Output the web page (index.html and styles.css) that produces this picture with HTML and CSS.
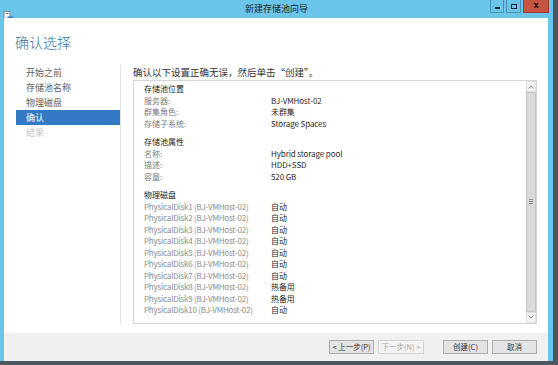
FILE: index.html
```html
<!DOCTYPE html>
<html lang="zh-CN">
<head>
  <meta charset="UTF-8">
  <title>新建存储池向导</title>
  <link rel="stylesheet" href="styles.css">
</head>
<body>
  <div class="window">
    <div class="titlebar">
      <div class="app-icon">
        <svg width="11" height="11" viewBox="0 0 11 11">
          <rect x="1" y="0.5" width="6" height="9" fill="#f4f4f4" stroke="#7d8a92" stroke-width="1"/>
          <rect x="2.5" y="2" width="3" height="1" fill="#7d8a92"/>
          <rect x="4.5" y="5.5" width="6" height="5" fill="#3a7bbf"/>
          <rect x="5.5" y="7" width="4" height="1" fill="#fff"/>
        </svg>
      </div>
      <div class="title">新建存储池向导</div>
      <div class="controls">
        <div class="ctl ctl-min"><span></span></div>
        <div class="ctl ctl-max"><span></span></div>
        <div class="ctl ctl-close">x</div>
      </div>
    </div>

    <div class="client">
      <div class="header">确认选择</div>

      <div class="main">
        <ul class="nav">
          <li>开始之前</li>
          <li>存储池名称</li>
          <li>物理磁盘</li>
          <li class="active">确认</li>
          <li class="disabled">结果</li>
        </ul>

        <div class="content">
          <div class="intro">确认以下设置正确无误，然后单击“创建”。</div>
          <div class="summary">
            <div class="list">
              <div class="section">
                <div class="sec-title">存储池位置</div>
                <div class="row"><span class="label">服务器:</span><span class="value">BJ-VMHost-02</span></div>
                <div class="row"><span class="label">群集角色:</span><span class="value">未群集</span></div>
                <div class="row"><span class="label">存储子系统:</span><span class="value">Storage Spaces</span></div>
              </div>
              <div class="section">
                <div class="sec-title">存储池属性</div>
                <div class="row"><span class="label">名称:</span><span class="value">Hybrid storage pool</span></div>
                <div class="row"><span class="label">描述:</span><span class="value">HDD+SSD</span></div>
                <div class="row"><span class="label">容量:</span><span class="value">520 GB</span></div>
              </div>
              <div class="section">
                <div class="sec-title">物理磁盘</div>
                <div class="row disk"><span class="label">PhysicalDisk1 (BJ-VMHost-02)</span><span class="value">自动</span></div>
                <div class="row disk"><span class="label">PhysicalDisk2 (BJ-VMHost-02)</span><span class="value">自动</span></div>
                <div class="row disk"><span class="label">PhysicalDisk3 (BJ-VMHost-02)</span><span class="value">自动</span></div>
                <div class="row disk"><span class="label">PhysicalDisk4 (BJ-VMHost-02)</span><span class="value">自动</span></div>
                <div class="row disk"><span class="label">PhysicalDisk5 (BJ-VMHost-02)</span><span class="value">自动</span></div>
                <div class="row disk"><span class="label">PhysicalDisk6 (BJ-VMHost-02)</span><span class="value">自动</span></div>
                <div class="row disk"><span class="label">PhysicalDisk7 (BJ-VMHost-02)</span><span class="value">自动</span></div>
                <div class="row disk"><span class="label">PhysicalDisk8 (BJ-VMHost-02)</span><span class="value">热备用</span></div>
                <div class="row disk"><span class="label">PhysicalDisk9 (BJ-VMHost-02)</span><span class="value">热备用</span></div>
                <div class="row disk"><span class="label">PhysicalDisk10 (BJ-VMHost-02)</span><span class="value">自动</span></div>
              </div>
            </div>
            <div class="scrollbar">
              <div class="sb-btn">
                <svg width="6" height="4" viewBox="0 0 6 4"><path d="M0.5 3.5 L3 1 L5.5 3.5" fill="none" stroke="#8a8a8a" stroke-width="1"/></svg>
              </div>
              <div class="sb-thumb"><span class="grip"></span></div>
              <div class="sb-btn">
                <svg width="6" height="4" viewBox="0 0 6 4"><path d="M0.5 0.5 L3 3 L5.5 0.5" fill="none" stroke="#8a8a8a" stroke-width="1"/></svg>
              </div>
            </div>
          </div>
        </div>
      </div>

      <div class="footer">
        <button class="btn">&lt; 上一步(P)</button>
        <button class="btn" disabled>下一步(N) &gt;</button>
        <button class="btn btn-create">创建(C)</button>
        <button class="btn">取消</button>
      </div>
    </div>
  </div>
</body>
</html>
```

FILE: styles.css
```css
* {
  box-sizing: border-box;
}
body {
  margin: 0;
  width: 558px;
  height: 365px;
  background: #4b565e;
  font-family: "Noto Sans CJK SC", "Noto Sans", sans-serif;
  overflow: hidden;
}
.window {
  width: 553px;
  height: 361px;
  background: #6bc5ea;
  display: flex;
  flex-direction: column;
}
.titlebar {
  height: 18px;
  display: grid;
  grid-template-columns: 1fr auto 1fr;
  align-items: start;
}
.app-icon {
  padding: 3px 0 0 3px;
  height: 18px;
}
.title {
  font-size: 9px;
  line-height: 18px;
  color: #1e1e1e;
}
.controls {
  display: flex;
  justify-content: flex-end;
  padding-right: 4px;
}
.ctl {
  height: 13px;
  border: 1px solid #4a8fb0;
  border-top: none;
  display: flex;
  align-items: center;
  justify-content: center;
}
.ctl-min {
  width: 14px;
  margin-right: 2px;
}
.ctl-min span {
  width: 5px;
  height: 2px;
  margin-top: 4px;
  background: #1d2a33;
}
.ctl-max {
  width: 15px;
  margin-right: 2px;
}
.ctl-max span {
  width: 6px;
  height: 5px;
  border: 1.5px solid #1d2a33;
}
.ctl-close {
  width: 26px;
  background: #c75442;
  border-color: #9c3b2e;
  color: #2a1010;
  font-size: 8px;
  font-weight: bold;
  line-height: 1;
  font-family: "DejaVu Sans", sans-serif;
}
.client {
  flex: 1;
  margin: 0 5px 5px 4px;
  background: #fff;
  display: flex;
  flex-direction: column;
}
.header {
  height: 47px;
  padding-left: 11px;
  display: flex;
  align-items: center;
  font-size: 14px;
  font-weight: 300;
  color: #3470a0;
}
.main {
  flex: 1;
  display: flex;
  padding-bottom: 9px;
}
.nav {
  list-style: none;
  margin: 0;
  padding: 0 0 0 12px;
  width: 117px;
  border-right: 1px solid #e2e2e2;
}
.nav li {
  height: 15px;
  line-height: 15px;
  padding-left: 10px;
  font-size: 9px;
  color: #606060;
}
.nav li.active {
  background: #3479c3;
  color: #fff;
}
.nav li.disabled {
  color: #c4c4c4;
}
.content {
  flex: 1;
  display: flex;
  flex-direction: column;
  padding: 0 11px 0 12px;
}
.intro {
  height: 15px;
  line-height: 15px;
  font-size: 9.5px;
  color: #333;
}
.summary {
  flex: 1;
  border: 1px solid #d6d6d6;
  display: flex;
}
.list {
  flex: 1;
  padding: 2px 0 0 10px;
}
.section {
  margin-bottom: 7px;
}
.sec-title,
.row {
  height: 11.5px;
  line-height: 11.5px;
  font-size: 8px;
}
.sec-title {
  color: #222;
}
.row {
  display: flex;
}
.label {
  width: 127px;
  color: #7a7a7a;
}
.value {
  color: #2a2a2a;
  letter-spacing: -0.1px;
}
.disk .label {
  color: #8c8c8c;
  letter-spacing: -0.2px;
}
.scrollbar {
  width: 10px;
  display: flex;
  flex-direction: column;
  background: #f0f0f0;
}
.sb-btn {
  height: 11px;
  display: flex;
  align-items: center;
  justify-content: center;
  background: #f4f4f4;
  border: 1px solid #e0e0e0;
}
.sb-thumb {
  flex: 1;
  background: #dadada;
  border: 1px solid #c4c4c4;
  display: flex;
  align-items: center;
  justify-content: center;
}
.grip {
  width: 4px;
  height: 5px;
  border-top: 1px solid #8a8a8a;
  border-bottom: 1px solid #8a8a8a;
  background: linear-gradient(#8a8a8a, #8a8a8a) center / 100% 1px no-repeat;
}
.footer {
  height: 28px;
  background: #f0f0f0;
  display: flex;
  align-items: center;
  justify-content: flex-end;
  padding-right: 11px;
}
.btn {
  width: 45px;
  height: 14px;
  padding: 0;
  margin-left: 4px;
  font-family: inherit;
  font-size: 7.5px;
  line-height: 12px;
  color: #333;
  background: #e3e3e3;
  border: 1px solid #adadad;
}
.btn:disabled {
  width: 46px;
  color: #a8a8a8;
  background: #f4f4f4;
  border-color: #d2d2d2;
}
.btn-create {
  margin-left: 19px;
}
```
